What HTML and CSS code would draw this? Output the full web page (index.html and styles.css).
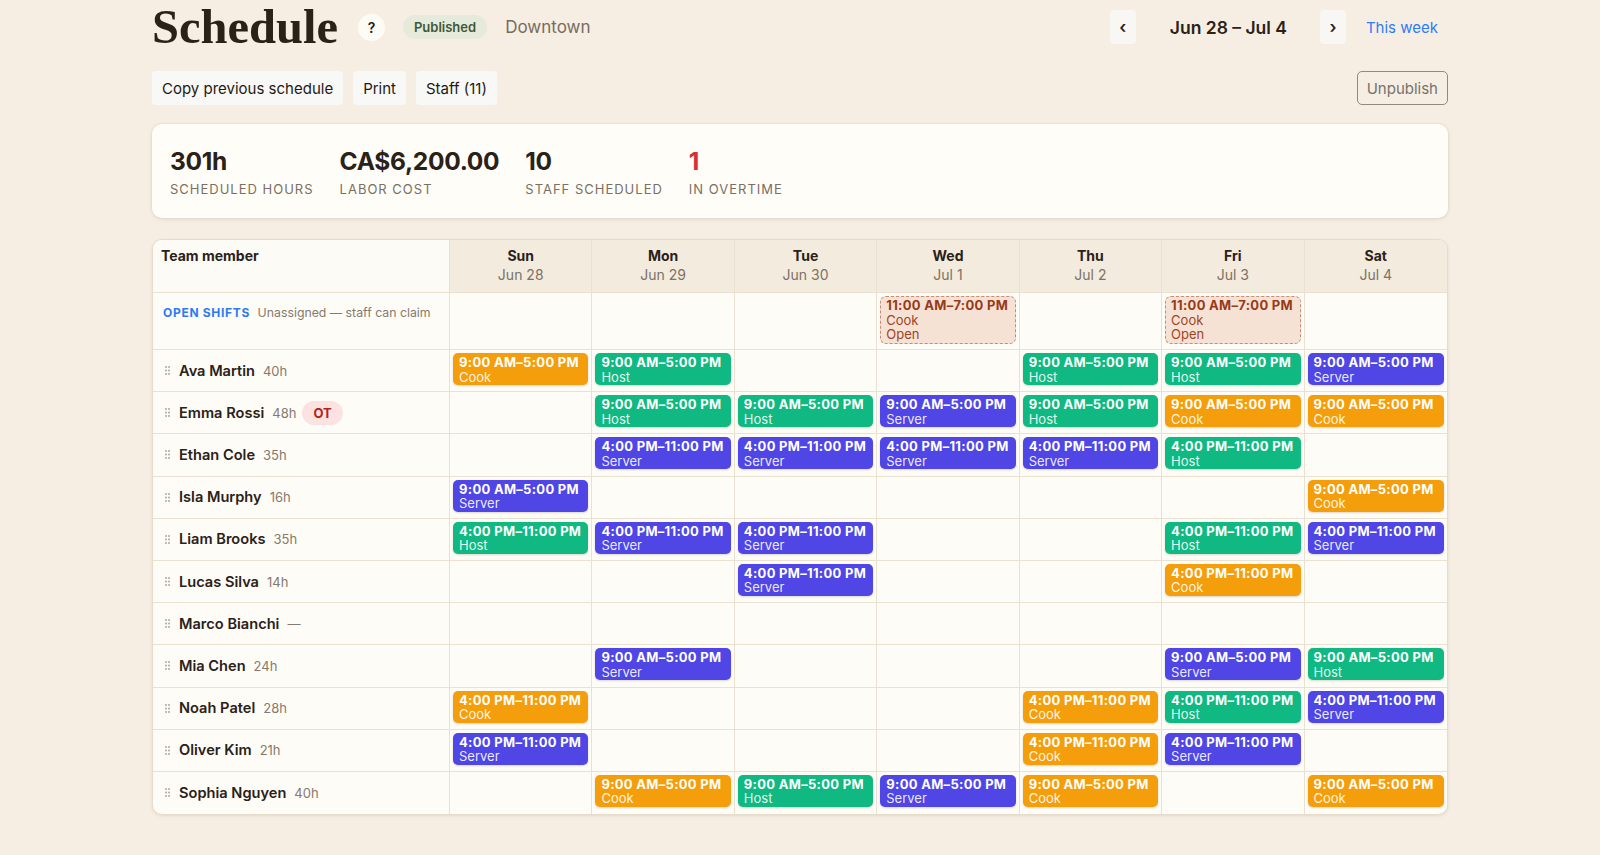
FILE: index.html
```html
<!DOCTYPE html>
<html lang="en">
<head>
    <meta charset="UTF-8">
    <meta name="viewport" content="width=device-width, initial-scale=1.0">
    <title>Schedule</title>
    <link rel="stylesheet" href="styles.css">
</head>
<body>

<div class="page">
    <header class="topbar">
        <div class="title-group">
            <h1>Schedule</h1>
            <button class="help-btn" type="button">?</button>
            <span class="status-pill">Published</span>
            <span class="location">Downtown</span>
        </div>
        <div class="week-nav">
            <button class="nav-btn" type="button">&lsaquo;</button>
            <span class="week-label">Jun 28 &ndash; Jul 4</span>
            <button class="nav-btn" type="button">&rsaquo;</button>
            <a class="this-week" href="#">This week</a>
        </div>
    </header>

    <div class="toolbar">
        <button class="tool-btn" type="button">Copy previous schedule</button>
        <button class="tool-btn" type="button">Print</button>
        <button class="tool-btn" type="button">Staff (11)</button>
        <button class="tool-btn unpublish" type="button">Unpublish</button>
    </div>

    <section class="stats">
        <div class="stat">
            <div class="stat-value">301h</div>
            <div class="stat-label">Scheduled hours</div>
        </div>
        <div class="stat">
            <div class="stat-value">CA$6,200.00</div>
            <div class="stat-label">Labor cost</div>
        </div>
        <div class="stat">
            <div class="stat-value">10</div>
            <div class="stat-label">Staff scheduled</div>
        </div>
        <div class="stat">
            <div class="stat-value alert">1</div>
            <div class="stat-label">In overtime</div>
        </div>
    </section>

    <div class="grid-wrap">
        <table class="schedule">
            <colgroup>
                <col class="col-team">
                <col><col><col><col><col><col><col>
            </colgroup>
            <thead>
                <tr id="headRow">
                    <th class="team-head">Team member</th>
                </tr>
            </thead>
            <tbody id="gridBody">
                <tr class="open-row" id="openRow">
                    <td class="team-cell open-label">
                        <span class="open-title">Open shifts</span>
                        <span class="open-note">Unassigned &mdash; staff can claim</span>
                    </td>
                </tr>
            </tbody>
        </table>
    </div>
</div>

<script>
    var days = [
        ['Sun', 'Jun 28'], ['Mon', 'Jun 29'], ['Tue', 'Jun 30'], ['Wed', 'Jul 1'],
        ['Thu', 'Jul 2'], ['Fri', 'Jul 3'], ['Sat', 'Jul 4']
    ];

    var times = {
        A: '9:00 AM–5:00 PM',
        P: '4:00 PM–11:00 PM'
    };

    // one entry per day, Sun..Sat: "A:Cook" = morning cook, "" = off
    var staff = [
        { name: 'Ava Martin', hours: '40h', shifts: ['A:Cook', 'A:Host', '', '', 'A:Host', 'A:Host', 'A:Server'] },
        { name: 'Emma Rossi', hours: '48h', ot: true, shifts: ['', 'A:Host', 'A:Host', 'A:Server', 'A:Host', 'A:Cook', 'A:Cook'] },
        { name: 'Ethan Cole', hours: '35h', shifts: ['', 'P:Server', 'P:Server', 'P:Server', 'P:Server', 'P:Host', ''] },
        { name: 'Isla Murphy', hours: '16h', shifts: ['A:Server', '', '', '', '', '', 'A:Cook'] },
        { name: 'Liam Brooks', hours: '35h', shifts: ['P:Host', 'P:Server', 'P:Server', '', '', 'P:Host', 'P:Server'] },
        { name: 'Lucas Silva', hours: '14h', shifts: ['', '', 'P:Server', '', '', 'P:Cook', ''] },
        { name: 'Marco Bianchi', hours: '—', shifts: ['', '', '', '', '', '', ''] },
        { name: 'Mia Chen', hours: '24h', shifts: ['', 'A:Server', '', '', '', 'A:Server', 'A:Host'] },
        { name: 'Noah Patel', hours: '28h', shifts: ['P:Cook', '', '', '', 'P:Cook', 'P:Host', 'P:Server'] },
        { name: 'Oliver Kim', hours: '21h', shifts: ['P:Server', '', '', '', 'P:Cook', 'P:Server', ''] },
        { name: 'Sophia Nguyen', hours: '40h', shifts: ['', 'A:Cook', 'A:Host', 'A:Server', 'A:Cook', '', 'A:Cook'] }
    ];

    var openShifts = ['', '', '', 'Cook', '', 'Cook', ''];

    var handle = '<svg class="handle" width="5" height="9" viewBox="0 0 5 9">' +
        '<circle cx="1" cy="1" r="0.9"/><circle cx="4" cy="1" r="0.9"/>' +
        '<circle cx="1" cy="4.5" r="0.9"/><circle cx="4" cy="4.5" r="0.9"/>' +
        '<circle cx="1" cy="8" r="0.9"/><circle cx="4" cy="8" r="0.9"/></svg>';

    var headRow = document.getElementById('headRow');
    days.forEach(function (d) {
        var th = document.createElement('th');
        th.className = 'day-head';
        th.innerHTML = '<div class="day-name">' + d[0] + '</div><div class="day-date">' + d[1] + '</div>';
        headRow.appendChild(th);
    });

    var openRow = document.getElementById('openRow');
    openShifts.forEach(function (role) {
        var td = document.createElement('td');
        td.className = 'shift-cell';
        if (role) {
            td.innerHTML = '<div class="open-chip"><div class="chip-time">11:00 AM–7:00 PM</div>' +
                '<div class="chip-role">' + role + '</div><div class="chip-role">Open</div></div>';
        }
        openRow.appendChild(td);
    });

    var body = document.getElementById('gridBody');
    staff.forEach(function (person) {
        var tr = document.createElement('tr');
        tr.className = 'member-row';

        var nameCell = '<td class="team-cell"><div class="member">' + handle +
            '<span class="member-name">' + person.name + '</span>' +
            '<span class="member-hours">' + person.hours + '</span>' +
            (person.ot ? '<span class="ot-badge">OT</span>' : '') +
            '</div></td>';

        var cells = person.shifts.map(function (s) {
            if (!s) return '<td class="shift-cell"></td>';
            var parts = s.split(':');
            var role = parts[1];
            return '<td class="shift-cell"><div class="chip chip-' + role.toLowerCase() + '">' +
                '<div class="chip-time">' + times[parts[0]] + '</div>' +
                '<div class="chip-role">' + role + '</div></div></td>';
        }).join('');

        tr.innerHTML = nameCell + cells;
        body.appendChild(tr);
    });
</script>

</body>
</html>
```

FILE: styles.css
```css
* {
    box-sizing: border-box;
}

body {
    margin: 0;
    background-color: #f6eee3;
    font-family: Inter, "Noto Sans", sans-serif;
    color: #2a2118;
}

button {
    font-family: inherit;
    cursor: pointer;
}

.page {
    width: 1296px;
    margin: 0 auto;
    padding-bottom: 40px;
}

/* header */
.topbar {
    display: flex;
    align-items: center;
    justify-content: space-between;
    height: 54px;
}

.title-group {
    display: flex;
    align-items: center;
    gap: 18px;
}

h1 {
    margin: -1px 2px 0 0;
    font-family: "Liberation Serif", "Times New Roman", serif;
    font-size: 48.5px;
    line-height: 48px;
    font-weight: 700;
    color: #2b2119;
}

.help-btn {
    width: 27px;
    height: 27px;
    border: none;
    border-radius: 50%;
    background-color: #fdfbf6;
    color: #2a2118;
    font-size: 14px;
    font-weight: 600;
    padding: 0;
}

.status-pill {
    height: 24px;
    padding: 0 11px;
    border-radius: 12px;
    background-color: #e5eadb;
    color: #3f5836;
    font-size: 13px;
    font-weight: 600;
    line-height: 24px;
}

.location {
    font-size: 17px;
    color: #776b5e;
}

.week-nav {
    display: flex;
    align-items: center;
}

.nav-btn {
    width: 26px;
    height: 34px;
    padding: 0;
    border: none;
    border-radius: 4px;
    background-color: #f8f7f4;
    color: #2a2118;
    font-size: 17px;
    font-weight: 600;
}

.week-label {
    margin: 0 33px 0 34px;
    font-size: 17.5px;
    font-weight: 600;
}

.this-week {
    margin: 0 10px 0 20px;
    color: #2c7cf5;
    font-size: 15px;
    text-decoration: none;
}

/* toolbar */
.toolbar {
    display: flex;
    align-items: center;
    gap: 10px;
    margin-top: 17px;
}

.tool-btn {
    height: 34px;
    padding: 0 10px;
    border: none;
    border-radius: 4px;
    background-color: #f8f8f6;
    color: #1f1a14;
    font-size: 15px;
}

.unpublish {
    margin-left: auto;
    padding: 0 9px;
    border: 1.5px solid #8f8a84;
    border-radius: 5px;
    background-color: transparent;
    color: #77726c;
}

/* stats */
.stats {
    display: flex;
    gap: 26px;
    height: 94px;
    margin-top: 19px;
    padding: 22px 18px 0;
    background-color: #fffdf8;
    border-radius: 10px;
    box-shadow: 0 1px 4px rgba(90, 70, 40, 0.13), 0 0 0 1px rgba(120, 100, 70, 0.04);
}

.stat-value {
    font-size: 24.5px;
    font-weight: 700;
    line-height: 30px;
    letter-spacing: -0.3px;
}

.stat-value.alert {
    color: #d92d3a;
}

.stat-label {
    margin-top: 5px;
    font-size: 13px;
    line-height: 16px;
    letter-spacing: 1px;
    text-transform: uppercase;
    color: #7a6f62;
}

/* schedule grid */
.grid-wrap {
    margin-top: 21px;
    border: 1px solid #e6dccb;
    border-radius: 10px;
    overflow: hidden;
    background-color: #fefcf7;
    box-shadow: 0 1px 3px rgba(90, 70, 40, 0.12);
}

.schedule {
    width: 100%;
    border-collapse: separate;
    border-spacing: 0;
    table-layout: fixed;
}

.col-team {
    width: 297px;
}

.schedule th,
.schedule td {
    border-right: 1px solid #ebe1d1;
    border-bottom: 1px solid #ebe1d1;
    padding: 0;
}

.schedule tr > :last-child {
    border-right: none;
}

.schedule tbody tr:last-child td {
    border-bottom: none;
}

.schedule th {
    height: 53px;
    vertical-align: top;
    padding-top: 6px;
    font-size: 14px;
    line-height: 19px;
}

.schedule .team-head {
    text-align: left;
    padding-left: 8px;
    font-weight: 700;
    background-color: #fdfbf6;
}

.day-head {
    text-align: center;
    background-color: #f3ebde;
}

.day-name {
    font-weight: 700;
}

.day-date {
    font-weight: 400;
    color: #7d7264;
}

.open-row td {
    height: 57px;
    vertical-align: top;
}

.schedule .open-label {
    padding: 10px 10px 0;
    line-height: 16px;
}

.open-title {
    font-size: 12px;
    font-weight: 700;
    letter-spacing: 0.7px;
    text-transform: uppercase;
    color: #2b7bf3;
    margin-right: 3px;
}

.open-note {
    font-size: 12.3px;
    color: #857a6c;
}

.member-row td {
    height: 42.2px;
}

.team-cell {
    vertical-align: middle;
}

.member {
    display: flex;
    align-items: center;
    padding-left: 12px;
}

.handle {
    fill: #a99f91;
    margin-right: 9px;
    flex-shrink: 0;
}

.member-name {
    font-size: 14.6px;
    font-weight: 600;
}

.member-hours {
    margin-left: 8px;
    font-size: 13px;
    color: #857a6c;
}

.ot-badge {
    margin-left: 6px;
    height: 24px;
    padding: 0 11px;
    border-radius: 12px;
    background-color: #fde2e2;
    color: #b42318;
    font-size: 13px;
    font-weight: 700;
    line-height: 24px;
}

.schedule .shift-cell {
    vertical-align: top;
    padding: 3px;
}

.chip {
    padding: 2px 6px 1px;
    border-radius: 5px;
    color: #ffffff;
    font-size: 13px;
    line-height: 14.5px;
    box-shadow: 0 1px 2px rgba(60, 40, 10, 0.18);
}

.chip-time {
    font-weight: 700;
    letter-spacing: 0.3px;
    white-space: nowrap;
}

.chip .chip-role {
    color: rgba(255, 255, 255, 0.9);
}

.chip-cook {
    background-color: #f59e0b;
}

.chip-host {
    background-color: #10b981;
}

.chip-server {
    background-color: #4f46e5;
}

.open-chip {
    padding: 1px 5px 1px;
    border: 1.5px dashed #c98b74;
    border-radius: 6px;
    background-color: #f6e1d5;
    color: #a0451f;
    font-size: 13px;
    line-height: 14.5px;
}

.open-chip .chip-time {
    color: #963a17;
}
```
